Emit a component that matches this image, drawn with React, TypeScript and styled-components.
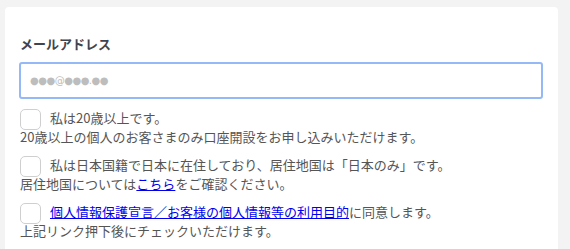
import React from "react";
import styled, { createGlobalStyle } from "styled-components";

const GlobalStyle = createGlobalStyle`
  html, body {
    margin: 0;
    padding: 0;
    background: #f3f3f3;
    font-family: "Noto Sans CJK JP", "Noto Sans", sans-serif;
  }
`;

const Page = styled.div`
  padding: 7px 12px 0 5px;
  height: 249px;
  box-sizing: border-box;
  overflow: hidden;
`;

const Card = styled.div`
  background: #fff;
  border-radius: 4px;
  padding: 27px 15px 20px 14px;
`;

const Label = styled.div`
  font-size: 13px;
  font-weight: bold;
  line-height: 20px;
  color: #3e4550;
  padding-left: 1px;
  margin-bottom: 8px;
`;

const Input = styled.input`
  display: block;
  width: 100%;
  box-sizing: border-box;
  height: 37px;
  border: 2px solid #94b9f6;
  border-radius: 3px;
  padding: 0 9px;
  font-size: 10px;
  font-family: "DejaVu Sans", sans-serif;
  color: #333;
  outline: none;
  &::placeholder {
    color: #bdbdbd;
    letter-spacing: -0.5px;
  }
`;

const Checks = styled.div`
  margin-top: 8px;
  padding-left: 1px;
  display: flex;
  flex-direction: column;
  gap: 7px;
`;

const Group = styled.div`
  font-size: 13px;
  line-height: 20px;
  color: #555;
`;

const CheckRow = styled.label`
  display: flex;
  align-items: center;
  gap: 9px;
  height: 22px;
`;

const Box = styled.span`
  width: 19px;
  height: 19px;
  border: 1px solid #cfcfcf;
  border-radius: 5px;
  flex-shrink: 0;
  margin-top: 2px;
`;

const Note = styled.div`
  margin-top: -2px;
`;

const Link = styled.a`
  color: #0000ee;
  text-decoration: underline;
`;

export default function App() {
  return (
    <>
      <GlobalStyle />
      <Page>
        <Card>
          <Label>メールアドレス</Label>
          <Input placeholder="●●●@●●●.●●" />
          <Checks>
            <Group>
              <CheckRow>
                <Box />
                <span>私は20歳以上です。</span>
              </CheckRow>
              <Note>20歳以上の個人のお客さまのみ口座開設をお申し込みいただけます。</Note>
            </Group>
            <Group>
              <CheckRow>
                <Box />
                <span>私は日本国籍で日本に在住しており、居住地国は「日本のみ」です。</span>
              </CheckRow>
              <Note>
                居住地国については<Link href="#">こちら</Link>をご確認ください。
              </Note>
            </Group>
            <Group>
              <CheckRow>
                <Box />
                <span>
                  <Link href="#">個人情報保護宣言／お客様の個人情報等の利用目的</Link>
                  に同意します。
                </span>
              </CheckRow>
              <Note>上記リンク押下後にチェックいただけます。</Note>
            </Group>
          </Checks>
        </Card>
      </Page>
    </>
  );
}
